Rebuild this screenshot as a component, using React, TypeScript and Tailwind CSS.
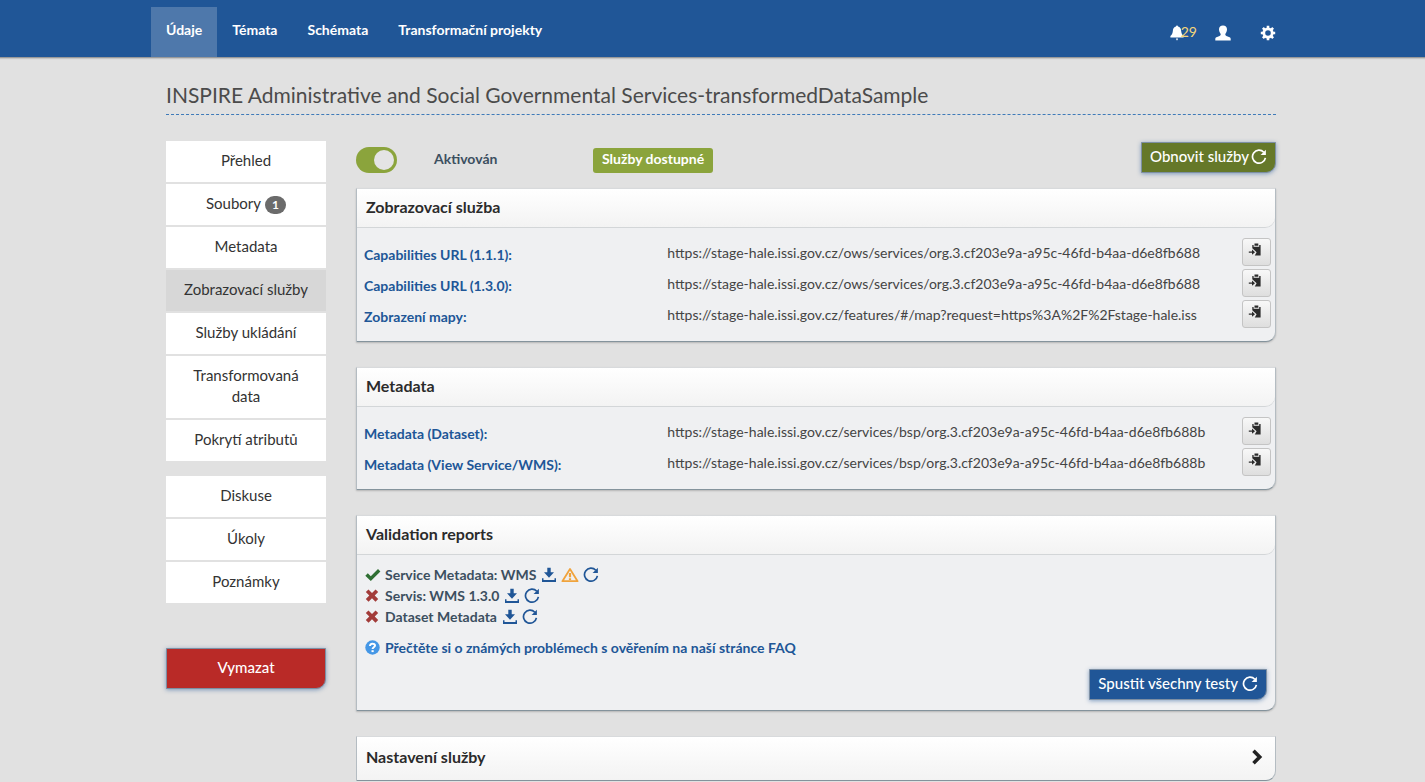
import { useState } from "react";
import type { ReactNode } from "react";

function BellIcon() {
  return (
    <svg viewBox="0 0 14 16" className="h-4 w-3.5" fill="currentColor" aria-hidden="true">
      <path d="M6 1.600a1 1 0 0 1 2 0C10 2 10.900 3.600 11.100 5.400C11.300 8 12 9.500 13.600 11V12.500H.4V11C2 9.500 2.700 8 2.900 5.400C3.100 3.600 4 2 6 1.600ZM6 13.600H8L7.500 15.200H6.500Z" />
    </svg>
  );
}

function UserIcon() {
  return (
    <svg viewBox="0 0 16 16" className="size-4" fill="currentColor" aria-hidden="true">
      <path d="M8 .5C10.500.5 12 2 12 4.300C12 5.500 11.700 6.500 11.200 7.400C10.700 8.200 10.300 8.800 10.300 9.600C10.300 10.300 10.600 10.600 11.400 10.900L14.600 12.300C15.400 12.700 15.700 13.400 15.700 14.300V15.500H.3V14.300C.3 13.400.6 12.700 1.400 12.300L4.600 10.900C5.400 10.600 5.700 10.300 5.700 9.600C5.700 8.800 5.300 8.200 4.800 7.400C4.300 6.500 4 5.500 4 4.300C4 2 5.500.5 8 .5Z" />
    </svg>
  );
}

function CogIcon() {
  return (
    <svg viewBox="0 0 16 16" className="size-4" aria-hidden="true">
      <circle cx="8" cy="8" r="4.200" fill="none" stroke="currentColor" strokeWidth="2.800" />
      <path
        d="M8 .8V3.500M8 12.500V15.200M.8 8H3.500M12.500 8H15.200M2.900 2.900L4.800 4.800M11.200 11.200L13.100 13.100M13.100 2.900L11.200 4.800M4.800 11.200L2.900 13.100"
        stroke="currentColor"
        strokeWidth="2.600"
      />
    </svg>
  );
}

function ReloadIcon() {
  return (
    <svg viewBox="0 0 16 16" className="inline-block size-4 shrink-0" aria-hidden="true">
      <path d="M12.800 3.300A6.500 6.500 0 1 0 14.400 8.800" fill="none" stroke="currentColor" strokeWidth="1.700" />
      <path d="M14.900.8V6H9.600Z" fill="currentColor" />
    </svg>
  );
}

function DownloadIcon() {
  return (
    <svg viewBox="0 0 16 16" className="inline-block size-4 shrink-0" fill="currentColor" aria-hidden="true">
      <path d="M6.300.8H9.700V5.300H13L8 10.800L3 5.300H6.300ZM1 11.200H2.500V13H13.500V11.200H15V15H1Z" />
    </svg>
  );
}

function WarningIcon() {
  return (
    <svg viewBox="0 0 18 16" className="inline-block h-4 w-[18px] shrink-0 text-[#f0a33c]" aria-hidden="true">
      <path d="M9 2L16.600 14.200H1.400Z" fill="none" stroke="currentColor" strokeWidth="1.800" strokeLinejoin="round" />
      <path d="M7.900 6H10.100V10.200H7.900ZM7.900 11.200H10.100V13H7.900Z" fill="currentColor" />
    </svg>
  );
}

function CheckIcon() {
  return (
    <svg viewBox="0 0 16 16" className="size-4 shrink-0 text-[#2f6f33]" fill="currentColor" aria-hidden="true">
      <path d="M.3 8.800L2.800 6.300L5.800 9.200L13 2L15.400 4.400L5.800 14Z" />
    </svg>
  );
}

function CrossIcon() {
  return (
    <svg viewBox="0 0 16 16" className="size-4 shrink-0 text-[#a23c3a]" fill="currentColor" aria-hidden="true">
      <path d="M3.500 1.400L7 4.900L10.500 1.400L13.200 4.100L9.700 7.600L13.200 11.100L10.500 13.800L7 10.300L3.500 13.800L.8 11.100L4.300 7.600L.8 4.100Z" />
    </svg>
  );
}

function HelpIcon() {
  return (
    <svg viewBox="0 0 16 16" className="size-4 shrink-0" aria-hidden="true">
      <circle cx="7.500" cy="7.500" r="7.200" fill="#4597e6" />
      <path d="M5 6C5 2.900 10 3 10 5.600C10 7.300 7.600 7.200 7.600 9" fill="none" stroke="#fff" strokeWidth="2" />
      <path d="M6.500 10.200H8.700V12.100H6.500Z" fill="#fff" />
    </svg>
  );
}

function PasteIcon() {
  return (
    <svg viewBox="0 0 14 14" className="size-3.5 text-[#2b2b2b]" fill="currentColor" aria-hidden="true">
      <path d="M6.500.6H10.300V2.800H6.500ZM4.300 2H5.600V3.700H11.200V2H12.600V12.400H6.800L8.600 9.200L4.300 5.200Z" />
      <path d="M.8 8.600H4V6.600L7 9.200L4 11.800V9.800H.8Z" />
    </svg>
  );
}

function ChevronIcon() {
  return (
    <svg viewBox="0 0 12 16" className="h-4 w-3 text-[#222]" aria-hidden="true">
      <path d="M2.500 1.800L8.700 8L2.500 14.200" fill="none" stroke="currentColor" strokeWidth="3.600" />
    </svg>
  );
}

const navItems = ["Údaje", "Témata", "Schémata", "Transformační projekty"];

const sideGroups: { label: string; count?: number }[][] = [
  [
    { label: "Přehled" },
    { label: "Soubory", count: 1 },
    { label: "Metadata" },
    { label: "Zobrazovací služby" },
    { label: "Služby ukládání" },
    { label: "Transformovaná data" },
    { label: "Pokrytí atributů" },
  ],
  [{ label: "Diskuse" }, { label: "Úkoly" }, { label: "Poznámky" }],
];

const serviceLinks = [
  {
    label: "Capabilities URL (1.1.1):",
    url: "https://stage-hale.issi.gov.cz/ows/services/org.3.cf203e9a-a95c-46fd-b4aa-d6e8fb688",
  },
  {
    label: "Capabilities URL (1.3.0):",
    url: "https://stage-hale.issi.gov.cz/ows/services/org.3.cf203e9a-a95c-46fd-b4aa-d6e8fb688",
  },
  {
    label: "Zobrazení mapy:",
    url: "https://stage-hale.issi.gov.cz/features/#/map?request=https%3A%2F%2Fstage-hale.iss",
  },
];

const metadataLinks = [
  {
    label: "Metadata (Dataset):",
    url: "https://stage-hale.issi.gov.cz/services/bsp/org.3.cf203e9a-a95c-46fd-b4aa-d6e8fb688b",
  },
  {
    label: "Metadata (View Service/WMS):",
    url: "https://stage-hale.issi.gov.cz/services/bsp/org.3.cf203e9a-a95c-46fd-b4aa-d6e8fb688b",
  },
];

const reports = [
  { label: "Service Metadata: WMS", ok: true, warning: true },
  { label: "Servis: WMS 1.3.0", ok: false, warning: false },
  { label: "Dataset Metadata", ok: false, warning: false },
];

function Panel({ title, children }: { title: string; children: ReactNode }) {
  return (
    <section className="rounded-br-[10px] border border-t-[#d8dadc] border-r-[#b4bcc2] border-b-[#84939c] border-l-[#b4bcc2] bg-[#eff0f2] shadow-[0_1px_2px_rgba(0,0,0,0.2)]">
      <h2 className="h-[39px] rounded-br-[10px] border-b border-[#d3d6d8] bg-linear-to-b from-white to-[#f3f3f3] px-[9px] text-base leading-9 font-bold text-[#2b2b2b]">
        {title}
      </h2>
      {children}
    </section>
  );
}

function LinkRows({ rows }: { rows: { label: string; url: string }[] }) {
  return (
    <ul className="px-1 pt-2.5 pb-2.5">
      {rows.map((row) => (
        <li key={row.label} className="flex h-[31px] items-start">
          <a href="#" className="w-1/3 shrink-0 pt-1.5 pl-[3px] text-sm leading-[21px] font-bold text-[#205697]">
            {row.label}
          </a>
          <span className="mr-[26px] ml-[3px] min-w-0 flex-1 overflow-hidden pt-1 text-sm leading-[21px] whitespace-nowrap text-[#444]">
            {row.url}
          </span>
          <button
            type="button"
            aria-label={`Kopírovat ${row.label}`}
            className="flex h-7 w-[29px] shrink-0 items-center justify-center rounded-[3px] border border-[#c4c4c4] bg-linear-to-b from-[#f8f8f8] to-[#dedede] pr-1 pb-1"
          >
            <PasteIcon />
          </button>
        </li>
      ))}
    </ul>
  );
}

export default function App() {
  const [enabled, setEnabled] = useState(true);

  return (
    <div className="min-h-screen bg-[#e1e1e1] font-['Lato','Noto_Sans',sans-serif] text-[15px] leading-[21px] text-[#333]">
      <header className="h-[58px] border-b border-[#9a9a9a] bg-[#205697] pl-[17px] shadow-[0_1px_1px_rgba(0,0,0,0.12)]">
        <div className="mx-auto flex h-full max-w-[1140px] items-end justify-between">
          <nav className="flex h-[50px] text-sm leading-[21px]">
            {navItems.map((item, index) => (
              <a
                key={item}
                href="#"
                className={`px-[15px] pt-3 font-bold text-white ${index === 0 ? "bg-[#4e78ab]" : ""}`}
              >
                {item}
              </a>
            ))}
          </nav>
          <div className="flex h-[50px] items-center pr-[15px] text-white">
            <a href="#" className="flex items-center text-[#f5d67a]" aria-label="Oznámení: 29">
              <span className="pt-0.5 text-white">
                <BellIcon />
              </span>
              <span className="-ml-[3px] text-sm">29</span>
            </a>
            <a href="#" className="ml-[18px] pt-0.5" aria-label="Uživatel">
              <UserIcon />
            </a>
            <a href="#" className="ml-[29px] pt-0.5" aria-label="Nastavení">
              <CogIcon />
            </a>
          </div>
        </div>
      </header>

      <div className="pl-[17px]">
        <div className="mx-auto max-w-[1140px] px-[15px] pt-[23px]">
          <h1 className="h-[34px] border-b border-dashed border-[#3f7ab8] text-[21px] leading-7 text-[#4b4b4b]">
            INSPIRE Administrative and Social Governmental Services-transformedDataSample
          </h1>

          <div className="mt-[26px] flex gap-[30px]">
            <aside className="w-40 shrink-0">
              <nav className="flex flex-col gap-[15px]">
                {sideGroups.map((group, groupIndex) => (
                  <ul key={groupIndex} className="flex flex-col gap-0.5">
                    {group.map((item) => (
                      <li key={item.label}>
                        <a
                          href="#"
                          className={`flex items-center justify-center gap-1 px-4 pt-[9px] pb-[11px] text-center ${
                            item.label === "Zobrazovací služby" ? "bg-[#d7d7d7]" : "bg-white"
                          }`}
                        >
                          {item.label}
                          {item.count !== undefined && (
                            <span className="mt-0.5 rounded-full bg-[#6b6b6b] px-[7px] text-xs leading-[18px] font-bold text-white">
                              {item.count}
                            </span>
                          )}
                        </a>
                      </li>
                    ))}
                  </ul>
                ))}
              </nav>
              <button
                type="button"
                className="mt-[45px] h-[41px] w-full rounded-br-[10px] border border-[#7d8fa3] bg-[#b92a27] pb-0.5 font-medium text-white shadow-[0_1px_4px_rgba(32,86,151,0.5)]"
              >
                Vymazat
              </button>
            </aside>

            <main className="min-w-0 flex-1">
              <div className="flex h-[47px] items-start">
                <label className="mt-1.5 flex w-[237px] shrink-0 cursor-pointer items-center gap-[37px] text-sm font-bold text-[#3c4f60]">
                  <input
                    type="checkbox"
                    role="switch"
                    checked={enabled}
                    onChange={(event) => setEnabled(event.target.checked)}
                    className="peer sr-only"
                  />
                  <span className="flex h-[26px] w-[41px] items-center justify-start rounded-full bg-[#999] px-[3px] peer-checked:justify-end peer-checked:bg-[#8ba43c]">
                    <span className="size-5 rounded-full bg-[#e4e4e4]" />
                  </span>
                  <span className="pb-0.5">{enabled ? "Aktivován" : "Neaktivní"}</span>
                </label>
                <span className="mt-[7px] h-[25px] rounded-[3px] bg-[#8ba43c] px-[9px] text-sm leading-[22px] font-bold text-white">
                  Služby dostupné
                </span>
                <button
                  type="button"
                  className="mt-px ml-auto flex h-[31px] items-center gap-0.5 rounded-br-[10px] border border-[#7d8fa3] bg-[#657829] px-2 pb-0.5 font-medium text-white shadow-[0_1px_4px_rgba(32,86,151,0.5)]"
                >
                  Obnovit služby
                  <ReloadIcon />
                </button>
              </div>

              <div className="flex flex-col gap-[25px]">
                <Panel title="Zobrazovací služba">
                  <LinkRows rows={serviceLinks} />
                </Panel>

                <Panel title="Metadata">
                  <LinkRows rows={metadataLinks} />
                </Panel>

                <Panel title="Validation reports">
                  <div className="px-2 pt-[9px] pb-2.5">
                    <ul className="text-sm font-bold text-[#3c4f60]">
                      {reports.map((report) => (
                        <li key={report.label} className="flex h-[21px] items-center gap-1">
                          {report.ok ? <CheckIcon /> : <CrossIcon />}
                          <span className="mr-px">{report.label}</span>
                          <a href="#" aria-label="Stáhnout" className="flex text-[#205697]">
                            <DownloadIcon />
                          </a>
                          {report.warning && <WarningIcon />}
                          <a href="#" aria-label="Spustit znovu" className="flex text-[#205697]">
                            <ReloadIcon />
                          </a>
                        </li>
                      ))}
                    </ul>
                    <a href="#" className="mt-2.5 flex items-center gap-1 text-sm leading-[21px] font-bold text-[#205697]">
                      <HelpIcon />
                      Přečtěte si o známých problémech s ověřením na naší stránce FAQ
                    </a>
                    <button
                      type="button"
                      className="mt-[11px] ml-auto flex h-[31px] items-center gap-1 rounded-br-[10px] border border-[#7d8fa3] bg-[#205697] px-2 pb-0.5 font-medium text-white shadow-[0_1px_4px_rgba(32,86,151,0.5)]"
                    >
                      Spustit všechny testy
                      <ReloadIcon />
                    </button>
                  </div>
                </Panel>

                <section className="rounded-br-[10px] border border-t-[#d8dadc] border-r-[#b4bcc2] border-b-[#84939c] border-l-[#b4bcc2] bg-linear-to-b from-white to-[#f3f3f3]">
                  <h2 className="text-base font-bold text-[#2b2b2b]">
                    <button type="button" className="flex h-[43px] w-full items-center justify-between pr-3 pb-1 pl-[9px]">
                      Nastavení služby
                      <ChevronIcon />
                    </button>
                  </h2>
                </section>
              </div>
            </main>
          </div>
        </div>
      </div>
    </div>
  );
}
